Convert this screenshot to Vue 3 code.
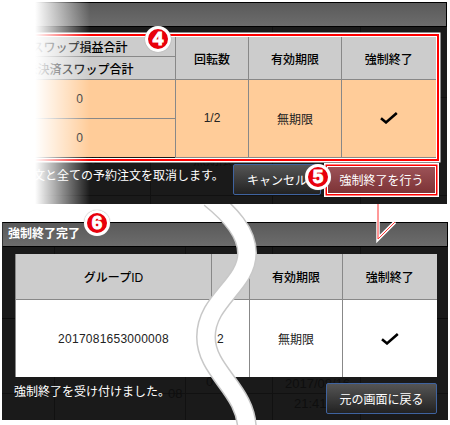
<template>
  <div class="page">
    <section class="panel panel-top">
      <h2 class="panel-title"></h2>
      <div class="panel-body">
        <span
          v-for="g in topGhosts"
          :key="g.text"
          class="ghost"
          :style="{ left: g.x + 'px', top: g.y + 'px' }"
        >{{ g.text }}</span>

        <table class="grid grid-top">
          <colgroup>
            <col style="width: 192px" />
            <col style="width: 73px" />
            <col style="width: 93px" />
            <col style="width: 94px" />
          </colgroup>
          <tbody>
            <tr class="head-sub">
              <th>スワップ損益合計</th>
              <th rowspan="2">回転数</th>
              <th rowspan="2">有効期限</th>
              <th rowspan="2">強制終了</th>
            </tr>
            <tr class="head-sub2">
              <th>未決済スワップ合計</th>
            </tr>
            <tr class="row-half">
              <td>0</td>
              <td rowspan="2">1/2</td>
              <td rowspan="2">無期限</td>
              <td rowspan="2">
                <svg class="check" viewBox="0 0 18 12">
                  <path d="M1 6.2L6 10.4L16.8 1" />
                </svg>
              </td>
            </tr>
            <tr class="row-half">
              <td>0</td>
            </tr>
          </tbody>
        </table>

        <div class="footer footer-top">
          <p class="message">注文と全ての予約注文を取消します。</p>
          <button class="btn btn-cancel">キャンセル</button>
          <button class="btn btn-danger">強制終了を行う</button>
        </div>
      </div>
    </section>

    <section class="panel panel-bottom">
      <h2 class="panel-title">強制終了完了</h2>
      <div class="panel-body">
        <span
          v-for="g in bottomGhosts"
          :key="g.text"
          class="ghost"
          :style="{ left: g.x + 'px', top: g.y + 'px' }"
        >{{ g.text }}</span>

        <table class="grid grid-bottom">
          <colgroup>
            <col style="width: 196px" />
            <col style="width: 38px" />
            <col style="width: 93px" />
            <col style="width: 94px" />
          </colgroup>
          <tbody>
            <tr class="head-row">
              <th>グループID</th>
              <th></th>
              <th>有効期限</th>
              <th>強制終了</th>
            </tr>
            <tr class="body-row">
              <td class="cell-id">2017081653000008</td>
              <td class="cell-left">2</td>
              <td>無期限</td>
              <td>
                <svg class="check" viewBox="0 0 18 12">
                  <path d="M1 6.2L6 10.4L16.8 1" />
                </svg>
              </td>
            </tr>
          </tbody>
        </table>

        <div class="footer footer-bottom">
          <p class="message">強制終了を受け付けました。</p>
          <button class="btn btn-back">元の画面に戻る</button>
        </div>
      </div>
    </section>

    <div class="fade"></div>

    <svg class="overlay" viewBox="0 0 450 425">
      <path class="wave-edge" :d="wavePath" />
      <path class="wave-fill" :d="wavePath" />
      <path class="callout-halo" :d="calloutPath" />
      <path class="callout-line" :d="calloutPath" />
    </svg>

    <span
      v-for="b in badges"
      :key="b.n"
      class="badge"
      :style="{ left: b.x + 'px', top: b.y + 'px' }"
    >{{ b.n }}</span>
  </div>
</template>

<script setup>
const wavePath =
  "M210 198C230 214 247 232 247 253C247 285 206 300 206 337C206 372 247 390 247 430";
const calloutPath = "M378 196V239L395 222";

const badges = [
  { n: 4, x: 145, y: 26 },
  { n: 5, x: 305, y: 164 },
  { n: 6, x: 84, y: 210 },
];

const topGhosts = [
  { text: "1/2", x: 83, y: 126 },
  { text: "無期限", x: 193, y: 126 },
];

const bottomGhosts = [
  { text: "0", x: 204, y: 128 },
  { text: "08", x: 166, y: 140 },
  { text: "2017/08/16", x: 283, y: 130 },
  { text: "21:41:", x: 292, y: 150 },
];
</script>

<style>
body {
  background: #fff;
}
</style>

<style scoped>
.page {
  position: relative;
  width: 450px;
  height: 425px;
  overflow: hidden;
  background: #fff;
  font-family: "Liberation Sans", "Noto Sans CJK JP", sans-serif;
  font-size: 12px;
  color: #222;
}

.panel {
  box-sizing: border-box;
  display: flex;
  flex-direction: column;
  background: #1a1a1a;
}

.panel-top {
  width: 447px;
  height: 202px;
  margin-top: 2px;
}

.panel-bottom {
  width: 446px;
  height: 198px;
  margin: 18px 0 0 2px;
}

.panel-title {
  box-sizing: border-box;
  height: 25px;
  margin: 0;
  padding: 0 5px;
  flex: none;
  border-top: 1px solid #000;
  border-bottom: 1px solid #000;
  border-left: 1px solid #333;
  border-right: 1px solid #000;
  background: linear-gradient(#5a5a5a, #6c6c6c);
  color: #fff;
  font-size: 12px;
  font-weight: 700;
  line-height: 22px;
}

.panel-body {
  position: relative;
  flex: 1;
}

.panel-top .panel-body {
  padding-top: 10px;
  background:
    linear-gradient(#111, #111) 150px 0 / 1px 100% no-repeat,
    linear-gradient(#111, #111) 272px 0 / 1px 100% no-repeat,
    linear-gradient(#111, #111) 360px 0 / 1px 100% no-repeat,
    linear-gradient(#111, #111) 0 70px / 100% 1px no-repeat,
    linear-gradient(#111, #111) 0 168px / 100% 1px no-repeat;
}

.panel-bottom .panel-body {
  padding-top: 7px;
  background:
    linear-gradient(#111, #111) 52px 0 / 1px 100% no-repeat,
    linear-gradient(#111, #111) 183px 0 / 1px 100% no-repeat,
    linear-gradient(#111, #111) 270px 0 / 1px 100% no-repeat,
    linear-gradient(#111, #111) 358px 0 / 1px 100% no-repeat,
    linear-gradient(#0c0c0c, #0c0c0c) 0 71px / 100% 1px no-repeat,
    linear-gradient(#111, #111) 0 146px / 100% 1px no-repeat;
}

.ghost {
  position: absolute;
  color: #0e0e0e;
  white-space: nowrap;
  font-size: 13px;
  line-height: 1;
}

.grid {
  position: relative;
  border-collapse: collapse;
  table-layout: fixed;
  width: 452px;
  text-align: center;
}

.grid th,
.grid td {
  padding: 0;
  border: 1px solid #888;
}

.grid th {
  background: #ccc;
  color: #000;
  font-weight: 500;
}

.grid tr:first-child th {
  border-top: 0;
}

.grid tr th:last-child,
.grid tr td:last-child {
  border-right: 0;
}

.grid tr:last-child td {
  border-bottom: 0;
}

.grid-top {
  margin-left: -17px;
  box-shadow: 0 0 0 1px #fff, 0 0 0 3px #f00, 0 0 0 4.5px #fff;
}

.grid-top td {
  background: #fc9;
}

.head-sub th {
  height: 19px;
}

.head-sub2 th {
  height: 22px;
}

.row-half td {
  height: 38px;
}

.grid-bottom {
  width: 421px;
  margin-left: 13px;
}

.grid-bottom td {
  background: #fff;
}

.head-row th {
  height: 45px;
}

.body-row td {
  height: 77px;
}

.cell-id {
  letter-spacing: 0.25px;
}

.cell-left {
  text-align: left;
  padding-left: 5px !important;
}

.check {
  display: block;
  width: 18px;
  height: 12px;
  margin: 0 auto;
}

.check path {
  fill: none;
  stroke: #000;
  stroke-width: 2.6;
}

.footer {
  position: relative;
  display: flex;
  align-items: flex-start;
}

.footer-top {
  margin-top: 6px;
  padding-right: 12px;
  gap: 7px;
}

.footer-bottom {
  margin-top: 6px;
  padding-right: 11px;
}

.message {
  margin: 3px auto 0 0;
  color: #fff;
  white-space: nowrap;
  line-height: 18px;
}

.footer-top .message {
  margin-left: 21px;
}

.footer-bottom .message {
  margin: 0 auto 0 12px;
}

.btn {
  box-sizing: border-box;
  padding: 0;
  border: 0;
  color: #fff;
  font: inherit;
}

.btn-cancel,
.btn-back {
  height: 31px;
  border: 1px solid #3f639f;
  border-radius: 2px;
  background: linear-gradient(#555, #222);
}

.btn-cancel {
  width: 88px;
}

.btn-back {
  width: 111px;
}

.btn-danger {
  width: 107px;
  height: 26px;
  margin-top: 3px;
  background: linear-gradient(#9c5257, #7d3336);
  box-shadow: 0 0 0 1px #fff, 0 0 0 2.5px #f00, 0 0 0 4px #fff;
}

.fade {
  position: absolute;
  left: 0;
  top: 0;
  width: 90px;
  height: 207px;
  background: linear-gradient(90deg, #fff 35px, rgba(255, 255, 255, 0));
}

.overlay {
  position: absolute;
  left: 0;
  top: 0;
  width: 450px;
  height: 425px;
  clip-path: inset(204px 0 0 0);
  pointer-events: none;
}

.overlay path {
  fill: none;
}

.wave-edge {
  stroke: #c8c8c8;
  stroke-width: 20;
}

.wave-fill {
  stroke: #fff;
  stroke-width: 17;
}

.callout-halo {
  stroke: #fff;
  stroke-width: 3.5;
}

.callout-line {
  stroke: #f33;
  stroke-width: 1;
}

.badge {
  position: absolute;
  box-sizing: border-box;
  width: 26px;
  height: 26px;
  border: 3px solid #fff;
  border-radius: 50%;
  background: #e8000c;
  color: #fff;
  font-family: "Liberation Sans", sans-serif;
  font-size: 19px;
  font-weight: 700;
  line-height: 20px;
  text-align: center;
  -webkit-text-stroke: 1px #fff;
  box-shadow: 0 0 1px #888;
}
</style>
